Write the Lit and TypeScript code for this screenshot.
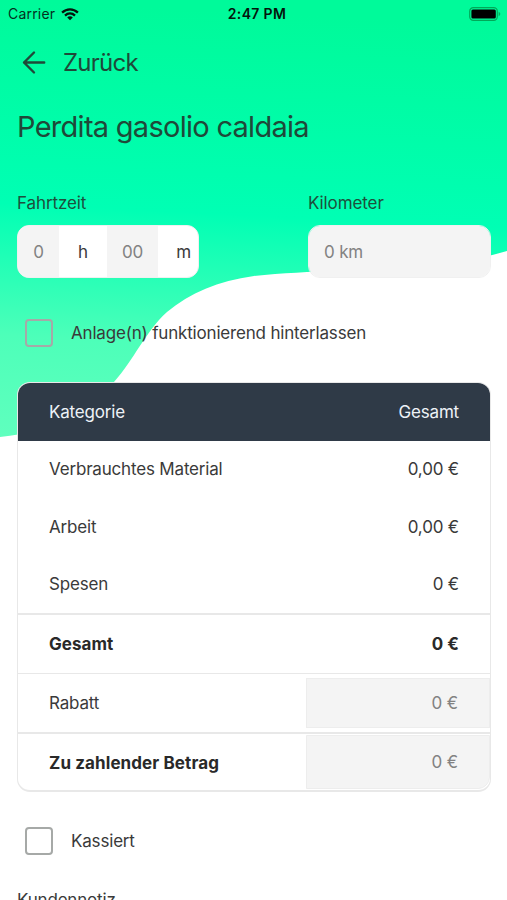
import { LitElement, html, css, svg } from "lit";
import { customElement } from "lit/decorators.js";

@customElement("status-bar")
class StatusBar extends LitElement {
  static styles = css`
    :host { display: grid; grid-template-columns: 1fr auto 1fr; align-items: center; height: 28px; padding: 0 6px 0 8px; color: #04301e; font-size: 14px; letter-spacing: 0.2px; }
    .left { display: flex; align-items: center; gap: 6px; }
    .time { font-weight: 600; font-size: 14px; color: #04140c; letter-spacing: 0.35px; padding-left: 5px; }
    .battery { justify-self: end; margin-top: -1px; }
    svg { display: block; }
  `;
  render() {
    return html`
      <div class="left"><span>Carrier</span>
        <svg width="18" height="13" viewBox="0 0 18 13" fill="none" stroke="#04140c" stroke-width="2.3">
          <path d="M1.1 4.6C5.6 .3 12.4 .3 16.9 4.6M4 7.6c3-2.8 7-2.8 10 0" />
          <path d="M9 12.2 6.2 9.4c1.6-1.5 4-1.5 5.6 0z" fill="#04140c" stroke="none" />
        </svg>
      </div>
      <span class="time">2:47 PM</span>
      <svg class="battery" width="32" height="14" viewBox="0 0 32 14">
        <rect x=".7" y=".7" width="27.6" height="12.6" rx="3.6" fill="none" stroke="#062" stroke-opacity=".55" stroke-width="1.2" />
        <rect x="2.4" y="2.4" width="24.4" height="9.2" rx="1.5" fill="#000" />
        <path d="M29.6 4.8q1.7.7 1.7 2.2t-1.7 2.2z" fill="#062" fill-opacity=".5" />
      </svg>`;
  }
}

@customElement("check-row")
class CheckRow extends LitElement {
  static styles = css`
    :host { display: flex; align-items: center; gap: 18px; height: 28px; padding-left: 8px; }
    .box { box-sizing: border-box; width: 28px; height: 28px; border: 2px solid #a6a9a7; border-radius: 4px; }
  `;
  render() {
    return html`<span class="box"></span><slot></slot>`;
  }
}

@customElement("cost-table")
class CostTable extends LitElement {
  static styles = css`
    :host { display: block; box-sizing: border-box; height: 410px; border: 1px solid #e8e8e8; border-bottom-width: 2px; border-radius: 13px; overflow: hidden; background: #fff; }
    .row { display: flex; box-sizing: border-box; align-items: center; justify-content: space-between; padding: 0 31px; height: 57.5px; }
    .head { background: #2f3a47; color: #edf2f7; height: 57.5px; }
    .total { height: 60px; border-top: 2px solid #e8e8e8; font-weight: 700; color: #292929; letter-spacing: 0.05px; }
    .input { height: 58.5px; border-top: 1px solid #e8e8e8; padding-right: 0; }
    .due { height: 60px; border-top: 2px solid #e8e8e8; font-weight: 700; color: #292929; padding-right: 0; letter-spacing: 0.1px; }
    .field { display: flex; box-sizing: border-box; align-items: center; justify-content: flex-end; width: 184px; height: 50px; padding-right: 31px; background: #f4f4f4; border: 1px solid #ededed; font-weight: 400; color: #828282; letter-spacing: -0.15px; }
    .due .field { height: 54px; border-radius: 0 0 12px 0; margin-bottom: 2px; }
  `;
  render() {
    return html`
      <div class="row head"><span>Kategorie</span><span>Gesamt</span></div>
      ${[["Verbrauchtes Material", "0,00 €"], ["Arbeit", "0,00 €"], ["Spesen", "0 €"]].map(
        ([name, value]) => html`<div class="row"><span>${name}</span><span>${value}</span></div>`
      )}
      <div class="row total"><span>Gesamt</span><span>0 €</span></div>
      <div class="row input"><span>Rabatt</span><span class="field">0 €</span></div>
      <div class="row due"><span>Zu zahlender Betrag</span><span class="field">0 €</span></div>`;
  }
}

@customElement("app-root")
class AppRoot extends LitElement {
  static styles = css`
    :host { display: block; position: relative; height: 900px; overflow: hidden; background: #fff; color: #3a3a3a; font: 17px/24px Inter, "Liberation Sans", sans-serif; letter-spacing: -0.18px; }
    .backdrop { position: absolute; left: 0; top: 0; }
    .page { position: relative; display: flex; flex-direction: column; }
    .content { display: flex; flex-direction: column; padding: 0 16px 0 17px; }
    .back { display: flex; align-items: center; gap: 16px; height: 30px; margin: 20px 0 0 4px; font-size: 24px; color: #1f4939; letter-spacing: -0.75px; }
    .title { margin: 30px 0 0; font-size: 29px; line-height: 38px; font-weight: 400; color: #1f4939; letter-spacing: -0.72px; }
    .fields { display: grid; grid-template-columns: 182px 183px; justify-content: space-between; margin-top: 45px; }
    .label { color: #1d4f3c; letter-spacing: -0.1px; }
    .control { display: flex; align-items: center; box-sizing: border-box; height: 53px; margin-top: 10px; border: 1px solid #f0f0f0; border-radius: 12px; overflow: hidden; background: #fff; }
    .cell { display: flex; align-items: center; justify-content: center; height: 100%; }
    .muted { background: #f4f4f4; color: #828282; }
    .hours { width: 41px; }
    .unit { width: 48px; }
    .minutes { width: 51px; }
    .last { flex: 1; justify-content: flex-end; padding-right: 7px; }
    .km { flex: 1; justify-content: flex-start; padding-left: 15px; }
    .working { margin-top: 41px; }
    .costs { margin-top: 35px; }
    .paid { margin-top: 35px; }
    .note { margin-top: 33px; }
  `;
  render() {
    return html`
      <svg class="backdrop" width="507" height="440" viewBox="0 0 507 440">
        <defs><linearGradient id="sky" x1="0" y1="0" x2="-22" y2="440" gradientUnits="userSpaceOnUse">
          <stop offset="0" stop-color="#00fa9a" /><stop offset=".46" stop-color="#00ffb4" />
          <stop offset=".76" stop-color="#4dffb9" /><stop offset="1" stop-color="#60ffbe" />
        </linearGradient></defs>
        ${svg`<path fill="url(#sky)" d="M0 0H507V251C480 259 450 265 410 268C370 271 310 270 254 276C218 281 190 293 167 312C145 332 134 360 114 382C85 412 55 431 0 437Z" />`}
      </svg>
      <div class="page">
        <status-bar></status-bar>
        <div class="content">
          <div class="back">
            <svg width="26" height="26" viewBox="0 0 26 26" fill="none" stroke="#1f4939" stroke-width="2.4" stroke-linecap="round" stroke-linejoin="round"><path d="M23.2 12.5H3M13 2.5 3 12.5l10 10" /></svg>
            <span>Zurück</span>
          </div>
          <h1 class="title">Perdita gasolio caldaia</h1>
          <div class="fields">
            <div><div class="label">Fahrtzeit</div>
              <div class="control">
                <span class="cell muted hours">0</span><span class="cell unit">h</span>
                <span class="cell muted minutes">00</span><span class="cell last">m</span>
              </div></div>
            <div><div class="label">Kilometer</div>
              <div class="control"><span class="cell muted km">0 km</span></div></div>
          </div>
          <check-row class="working">Anlage(n) funktionierend hinterlassen</check-row>
          <cost-table class="costs"></cost-table>
          <check-row class="paid">Kassiert</check-row>
          <div class="note">Kundennotiz</div>
        </div>
      </div>`;
  }
}
